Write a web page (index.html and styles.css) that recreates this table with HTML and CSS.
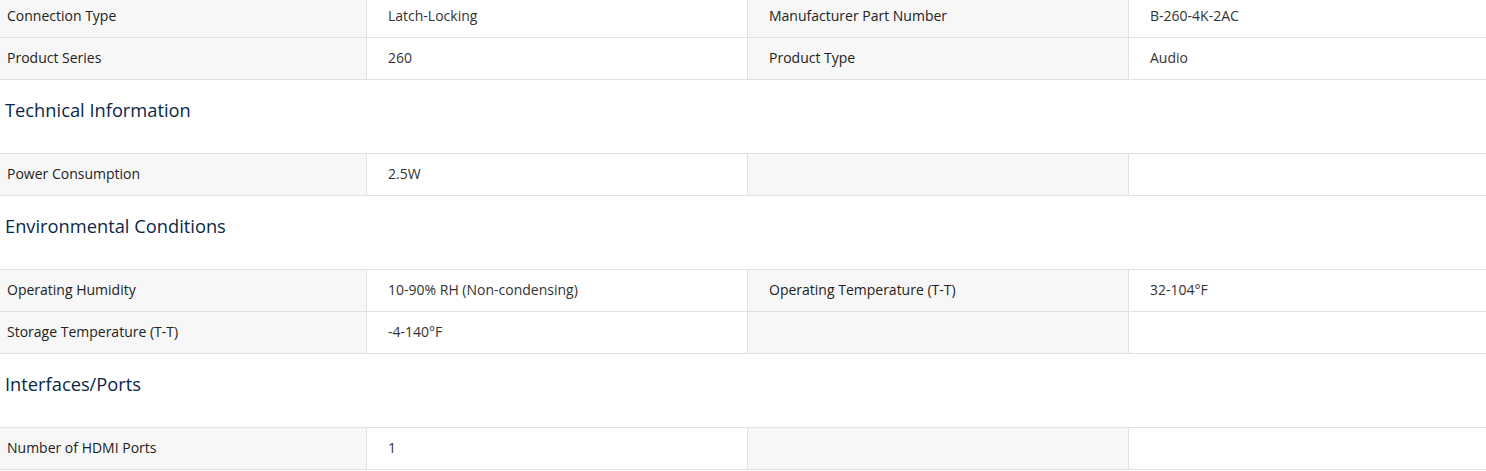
FILE: index.html
```html
<!DOCTYPE html>
<html lang="en">
<head>
<meta charset="utf-8">
<title>Specifications</title>
<link rel="stylesheet" href="styles.css">
</head>
<body>
<div class="specs">
  <div class="grid first">
    <div class="cell label">Connection Type</div>
    <div class="cell value">Latch-Locking</div>
    <div class="cell label">Manufacturer Part Number</div>
    <div class="cell value">B-260-4K-2AC</div>
    <div class="cell label">Product Series</div>
    <div class="cell value">260</div>
    <div class="cell label">Product Type</div>
    <div class="cell value">Audio</div>
  </div>
  <h2 class="section-title">Technical Information</h2>
  <div class="grid">
    <div class="cell label">Power Consumption</div>
    <div class="cell value">2.5W</div>
    <div class="cell label"></div>
    <div class="cell value"></div>
  </div>
  <h2 class="section-title">Environmental Conditions</h2>
  <div class="grid">
    <div class="cell label">Operating Humidity</div>
    <div class="cell value">10-90% RH (Non-condensing)</div>
    <div class="cell label">Operating Temperature (T-T)</div>
    <div class="cell value">32-104°F</div>
    <div class="cell label">Storage Temperature (T-T)</div>
    <div class="cell value">-4-140°F</div>
    <div class="cell label"></div>
    <div class="cell value"></div>
  </div>
  <h2 class="section-title">Interfaces/Ports</h2>
  <div class="grid">
    <div class="cell label">Number of HDMI Ports</div>
    <div class="cell value">1</div>
    <div class="cell label"></div>
    <div class="cell value"></div>
  </div>
</div>
</body>
</html>
```

FILE: styles.css
```css
html, body {
  margin: 0;
  padding: 0;
  background: #ffffff;
  overflow: hidden;
}
body {
  font-family: "Open Sans", "Liberation Sans", sans-serif;
  color: #222222;
}
.specs {
  margin-top: -5px;
}
.grid {
  display: grid;
  grid-template-columns: repeat(4, 381px);
  margin-left: -15px;
  border-top: 1px solid #e1e1e1;
}
.cell {
  height: 39px;
  line-height: 39px;
  padding: 0 21px 2px;
  font-size: 14px;
  border-bottom: 1px solid #e1e1e1;
  border-left: 1px solid #e1e1e1;
  white-space: nowrap;
  overflow: hidden;
}
.cell.label {
  background: #f7f7f7;
  color: #222222;
}
.cell.value {
  background: #ffffff;
  color: #333333;
}
.section-title {
  margin: 0;
  padding: 16px 5px 30px;
  line-height: 27px;
  font-size: 18.3px;
  font-weight: 500;
  color: #0a2748;
}
```
